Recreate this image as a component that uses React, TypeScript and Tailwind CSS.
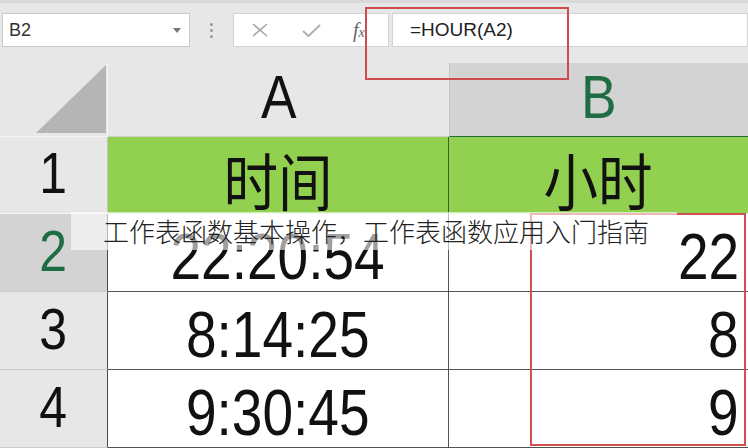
import React from "react";

const sans = { fontFamily: '"Liberation Sans", Arial, sans-serif' };

function Big({ children, className = "" }: { children: React.ReactNode; className?: string }) {
  return (
    <span
      className={"inline-block leading-none scale-x-[0.86] " + className}
      style={sans}
    >
      {children}
    </span>
  );
}

function Cjk({ children }: { children: React.ReactNode }) {
  return (
    <span
      className="inline-block leading-none scale-x-[0.88] text-[62px] text-[#111]"
      style={{ fontFamily: '"Noto Sans CJK SC", sans-serif' }}
    >
      {children}
    </span>
  );
}

export default function App() {
  const rows = [
    { n: "2", a: "22:20:54", b: "22", sel: true },
    { n: "3", a: "8:14:25", b: "8", sel: false },
    { n: "4", a: "9:30:45", b: "9", sel: false },
  ];
  return (
    <div className="relative w-[748px] h-[448px] overflow-hidden bg-[#e7e7e7] select-none">
      {/* toolbar */}
      <div className="flex h-[63px] items-start border-t-[3px] border-[#d9d9d9] pt-[10px]">
        <div className="ml-[2px] flex h-[34px] w-[188px] items-center justify-between border border-[#c9c9c9] bg-white pl-[6px] pr-[8px]">
          <span className="text-[18px] text-[#333]" style={sans}>B2</span>
          <svg width="8" height="5" viewBox="0 0 8 5"><path d="M0 0 L8 0 L4 5 Z" fill="#777" /></svg>
        </div>
        <div className="flex h-[34px] w-[43px] flex-col items-center justify-center gap-[3px]">
          <span className="h-[3px] w-[3px] rounded-full bg-[#9a9a9a]" />
          <span className="h-[3px] w-[3px] rounded-full bg-[#9a9a9a]" />
          <span className="h-[3px] w-[3px] rounded-full bg-[#9a9a9a]" />
        </div>
        <div className="relative flex h-[34px] w-[156px] items-center border border-[#d3d3d3] bg-white">
          <svg className="ml-[18px]" width="16" height="14" viewBox="0 0 16 14">
            <path d="M1 1 L15 13 M15 1 L1 13" stroke="#a8a8a8" strokeWidth="1.6" fill="none" />
          </svg>
          <svg className="ml-[34px]" width="19" height="13" viewBox="0 0 19 13">
            <path d="M1 7 L6.5 12 L18 1" stroke="#b0b0b0" strokeWidth="2" fill="none" />
          </svg>
          <span
            className="ml-[32px] text-[20px] italic text-[#666]"
            style={{ fontFamily: '"Liberation Serif", serif' }}
          >
            f<span className="text-[14px]">x</span>
          </span>
        </div>
        <div className="ml-[3px] flex h-[34px] flex-1 items-center border border-[#d3d3d3] bg-white pl-[17px]">
          <span className="text-[19px] text-[#222]" style={sans}>=HOUR(A2)</span>
        </div>
      </div>

      {/* grid */}
      <div className="grid grid-cols-[108px_341px_299px] grid-rows-[74px_77px_78px_78px_78px]">
        {/* corner */}
        <div className="flex items-end justify-end border-b border-r border-[#f4f4f4] pb-[3px] pr-[1px]">
          <svg width="70" height="68" viewBox="0 0 70 68"><path d="M0 68 L70 0 L70 68 Z" fill="#b5b5b5" /></svg>
        </div>
        <div className="flex items-end justify-center border-b border-[#cfcfcf] pb-[8px]">
          <Big className="text-[62px] text-[#111]">A</Big>
        </div>
        <div className="flex items-end justify-center border-b border-l border-b-[#1f6b3a] border-l-[#c4c4c4] bg-[#d3d3d3] pb-[8px]">
          <Big className="text-[62px] text-[#1f6e43]">B</Big>
        </div>

        {/* row 1 */}
        <div className="flex items-end justify-center border-b border-r border-b-[#f4f4f4] border-r-[#c4c4c4] pb-[11px]">
          <Big className="text-[58px] text-[#111]">1</Big>
        </div>
        <div className="flex items-center justify-center border-b border-r border-b-[#d5ebc4] border-r-[#3b5e2b] bg-[#92d050] pt-[8px]">
          <Cjk>时间</Cjk>
        </div>
        <div className="flex items-center justify-center border-b border-b-[#d5ebc4] bg-[#92d050] pt-[8px]">
          <Cjk>小时</Cjk>
        </div>

        {rows.map((r) => (
          <React.Fragment key={r.n}>
            <div
              className={
                "flex items-end justify-center border-b border-r border-b-[#cdcdcd] border-r-[#4a4a4a] pb-[11px] " +
                (r.sel ? "bg-[#d3d3d3]" : "bg-[#e7e7e7]")
              }
            >
              <Big className={"text-[58px] " + (r.sel ? "text-[#1f6e43]" : "text-[#111]")}>{r.n}</Big>
            </div>
            <div className="flex items-end justify-center border-b border-r border-b-[#4d5750] border-r-[#4d5750] bg-white pb-[2px]">
              <Big className="text-[64px] text-[#111]">{r.a}</Big>
            </div>
            <div className="flex items-end justify-end border-b border-b-[#4d5750] bg-white pb-[2px] pr-[9px]">
              <Big className="origin-right text-[64px] text-[#111]">{r.b}</Big>
            </div>
          </React.Fragment>
        ))}
      </div>

      {/* red highlight boxes */}
      <div className="absolute left-[365px] top-[7px] h-[73px] w-[204px] border-2 border-[#cf4c4e]" />
      <div className="absolute left-[530px] top-[213px] h-[233px] w-[216px] border-2 border-[#d0504f]" />

      {/* watermark overlay */}
      <div className="absolute left-[71px] top-[212px] flex h-[38px] w-[606px] items-center bg-white/60 pl-[32px]">
        <span
          className="text-[26px] font-light leading-none text-[#222]"
          style={{ fontFamily: '"Noto Sans CJK SC", sans-serif' }}
        >
          工作表函数基本操作，工作表函数应用入门指南
        </span>
      </div>
    </div>
  );
}
